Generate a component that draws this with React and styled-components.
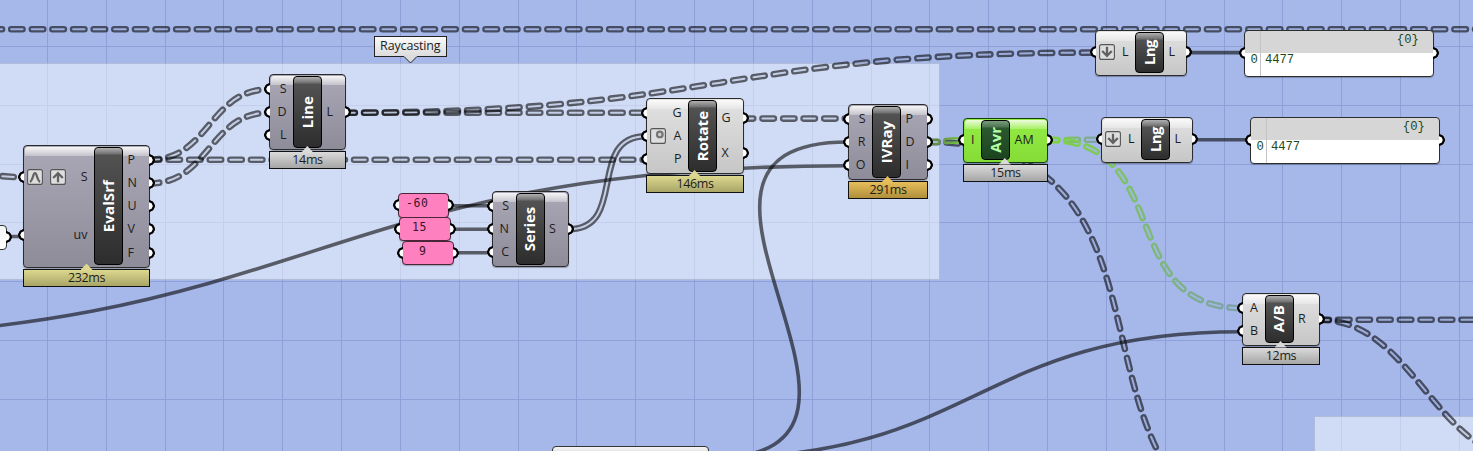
import React from 'react';
import styled, { createGlobalStyle, css } from 'styled-components';

const Global = createGlobalStyle`
  body { margin: 0; overflow: hidden; background: #a6b8ea; }
  * { box-sizing: border-box; }
`;

const Canvas = styled.main`
  position: relative;
  width: 1473px;
  height: 451px;
  overflow: hidden;
  background: #a6b8ea;
  font-family: 'Open Sans', 'Noto Sans', sans-serif;
  color: #1d1d1d;
`;

const Layer = styled.svg`
  position: absolute;
  inset: 0;
  display: block;
`;

/* ---------- nodes ---------- */

const tones = {
  gray: css`
    background: linear-gradient(#aaa8b6, #8e8c99);
    --gloss-top: #f6f6f7;
    --gloss-end: #c3c2cb;
  `,
  light: css`
    background: linear-gradient(#e2e2e2, #c6c6c6);
    --gloss-top: #fafafa;
    --gloss-end: #e6e6e6;
  `,
  green: css`
    background: linear-gradient(#95ec47, #84dc35);
    --gloss-top: #ecfcdc;
    --gloss-end: #a6f065;
  `,
};

const Item = styled.section`
  position: absolute;
  left: ${(p) => p.$x}px;
  top: ${(p) => p.$y}px;
  width: ${(p) => p.$w}px;
`;

const Body = styled.div`
  position: relative;
  display: flex;
  height: ${(p) => p.$h}px;
  padding: 2px 0 2.6px;
  border: 1px solid ${(p) => (p.$tone === 'green' ? '#12400c' : '#2b2b2e')};
  border-radius: 4px;
  box-shadow: 0 1px 1px rgba(0, 0, 0, 0.3);
  ${(p) => tones[p.$tone]}
  &::before {
    content: '';
    position: absolute;
    inset: 0.5px 0.5px auto;
    height: 9px;
    border-radius: 3px 3px 0 0;
    background: linear-gradient(var(--gloss-top), var(--gloss-end));
  }
`;

const Column = styled.div`
  position: relative;
  display: flex;
  flex-direction: column;
  flex: ${(p) => (p.$w ? `0 0 ${p.$w}px` : '1')};
`;

const portBase = css`
  content: '';
  position: absolute;
  top: calc(50% - 6px);
  width: 6px;
  height: 12px;
`;

const portLeft = css`
  ${portBase}
  left: -6px;
  background: radial-gradient(circle at 100% 50%, #fff 3.3px, #000 3.9px, #000 5.5px, transparent 6.1px);
`;

const portRight = css`
  ${portBase}
  right: -6px;
  background: radial-gradient(circle at 0 50%, #fff 3.3px, #000 3.9px, #000 5.5px, transparent 6.1px);
`;

const Socket = styled.div`
  position: relative;
  flex: 1;
  display: flex;
  align-items: center;
  gap: 7px;
  font-size: 12.5px;
  line-height: 16px;
  ${(p) => (p.$side === 'in' ? 'padding: 0 6.5px 0 3px;' : 'padding: 0 0 0 4.5px;')}
  &::after {
    ${(p) => (p.$side === 'in' ? portLeft : portRight)}
  }
`;

const SocketName = styled.span`
  margin-left: ${(p) => (p.$side === 'in' ? 'auto' : '0')};
`;

const Core = styled.div`
  position: relative;
  flex: 0 0 29px;
  margin: -0.8px 0;
  display: flex;
  align-items: center;
  justify-content: center;
  border: 1.5px solid #000;
  border-radius: 4px;
  background: ${(p) =>
    p.$tone === 'green'
      ? 'linear-gradient(#7b9c7c, #4d7450 6px, #2c5830 7px, #1b441e)'
      : 'linear-gradient(#b0b0b0, #707070 6px, #525252 7px, #2d2d2d)'};
  color: ${(p) => (p.$tone === 'green' ? '#b4ffa6' : '#fff')};
`;

const CoreName = styled.span`
  writing-mode: vertical-rl;
  transform: rotate(180deg) translateX(1.2px);
  font-size: 15px;
  font-weight: 700;
  line-height: 20px;
  white-space: nowrap;
  letter-spacing: ${(p) => p.$track || 0}px;
`;

const timeTones = {
  gray: ['#dadada', '#a6a6a6'],
  olive: ['#dcd88f', '#a9a566'],
  amber: ['#e6bf5b', '#b08f3b'],
};

const Timer = styled.div`
  position: relative;
  margin-top: 1px;
  height: 18px;
  border: 1px solid #111;
  background: linear-gradient(${(p) => timeTones[p.$tone].join(',')});
  font-size: 12.5px;
  line-height: 15px;
  letter-spacing: -0.35px;
  text-align: center;
  &::before {
    content: '';
    position: absolute;
    left: ${(p) => p.$tip - 7}px;
    top: -6.5px;
    width: 12px;
    height: 6.5px;
    background: ${(p) => timeTones[p.$tone][0]};
    clip-path: polygon(50% 0, 100% 100%, 0 100%);
  }
`;

const Badge = styled.svg`
  flex: none;
  width: 16px;
  height: 16px;
  display: block;
`;

const glyphs = {
  reparam: <path d="M2.8 12.8C6 12 5.8 4.2 8 4.2S10 12 13.2 12.8" />,
  graft: <path d="M8 13.2V4.4M3.2 9 8 4.2 12.8 9" />,
  flatten: <path d="M8 2.8v8.8M3.2 7 8 11.8 12.8 7" />,
  degrees: (
    <g>
      <circle cx="9.8" cy="6.4" r="2.8" stroke="#777" />
      <circle cx="9.8" cy="6.4" r="1.2" fill="#ccc" stroke="none" />
    </g>
  ),
};

const Modifier = ({ kind }) => (
  <Badge viewBox="0 0 16 16">
    <rect x="0.6" y="0.6" width="14.8" height="14.8" rx="2" fill="#dedede" stroke="#555" strokeWidth="1.1" />
    <g fill="none" stroke="#626262" strokeWidth="2.3">{glyphs[kind]}</g>
  </Badge>
);

const Node = ({ x, y, w, h, tone = 'light', left, name, track, inputs, outputs, time }) => (
  <Item $x={x} $y={y} $w={w}>
    <Body $h={h} $tone={tone}>
      <Column $w={left - 1}>
        {inputs.map((s) => (
          <Socket key={s.name} $side="in">
            {(s.mods || []).map((m) => <Modifier key={m} kind={m} />)}
            <SocketName $side="in">{s.name}</SocketName>
          </Socket>
        ))}
      </Column>
      <Core $tone={tone}><CoreName $track={track}>{name}</CoreName></Core>
      <Column>
        {outputs.map((s) => (
          <Socket key={s} $side="out"><SocketName>{s}</SocketName></Socket>
        ))}
      </Column>
    </Body>
    {time && <Timer $tone={time.tone} $tip={time.tip}>{time.text}</Timer>}
  </Item>
);

const nodes = [
  { x: 23, y: 145, w: 127, h: 123, tone: 'gray', left: 71, name: 'EvalSrf', track: 0.1,
    inputs: [{ name: 'S', mods: ['reparam', 'graft'] }, { name: 'uv' }],
    outputs: ['P', 'N', 'U', 'V', 'F'], time: { text: '232ms', tone: 'olive', tip: 63.5 } },
  { x: 269, y: 74, w: 77, h: 76.4, tone: 'gray', left: 24, name: 'Line', track: 0.1,
    inputs: [{ name: 'S' }, { name: 'D' }, { name: 'L' }],
    outputs: ['L'], time: { text: '14ms', tone: 'gray', tip: 38.3 } },
  { x: 491.5, y: 191, w: 77, h: 76.4, tone: 'gray', left: 24, name: 'Series', track: -0.1,
    inputs: [{ name: 'S' }, { name: 'N' }, { name: 'C' }], outputs: ['S'] },
  { x: 646, y: 98, w: 98, h: 76.4, left: 42, name: 'Rotate', track: 0,
    inputs: [{ name: 'G' }, { name: 'A', mods: ['degrees'] }, { name: 'P' }],
    outputs: ['G', 'X'], time: { text: '146ms', tone: 'olive', tip: 48.5 } },
  { x: 848, y: 104, w: 80, h: 76.4, tone: 'gray', left: 24, name: 'IVRay', track: 0,
    inputs: [{ name: 'S' }, { name: 'R' }, { name: 'O' }],
    outputs: ['P', 'D', 'I'], time: { text: '291ms', tone: 'amber', tip: 39.5 } },
  { x: 963, y: 118, w: 85, h: 44.5, tone: 'green', left: 18, name: 'Avr', track: 0,
    inputs: [{ name: 'I' }], outputs: ['AM'], time: { text: '15ms', tone: 'gray', tip: 41.8 } },
  { x: 1095, y: 30, w: 92, h: 45.5, left: 39, name: 'Lng', track: -0.6,
    inputs: [{ name: 'L', mods: ['flatten'] }], outputs: ['L'] },
  { x: 1101, y: 117, w: 92, h: 45.5, left: 39, name: 'Lng', track: -0.6,
    inputs: [{ name: 'L', mods: ['flatten'] }], outputs: ['L'] },
  { x: 1242, y: 293, w: 78, h: 52.6, left: 22.5, name: 'A/B', track: 0.2,
    inputs: [{ name: 'A' }, { name: 'B' }], outputs: ['R'], time: { text: '12ms', tone: 'gray', tip: 38.5 } },
];

/* ---------- panels ---------- */

const PanelFrame = styled.section`
  position: absolute;
  left: ${(p) => p.$x}px;
  top: ${(p) => p.$y}px;
  width: 189.4px;
  height: 46.5px;
  display: grid;
  grid-template: 22px 1fr / 16px 1fr;
  border: 1px solid #2d2d2d;
  border-radius: 4px;
  background: linear-gradient(#d6d6d6 22px, #fff 22px);
  box-shadow: 0 1px 1px rgba(0, 0, 0, 0.25);
  font: 12.2px/14px 'Liberation Mono', monospace;
  color: #1c4a1c;
  &::before { ${portLeft} top: 16px; }
  &::after { ${portRight} top: 16px; }
`;

const PanelCell = styled.span`
  padding: ${(p) => p.$pad};
  text-align: ${(p) => p.$align || 'left'};
  border-right: ${(p) => (p.$rule ? '1px solid #c4c4c4' : '0')};
`;

const Panel = ({ x, y }) => (
  <PanelFrame $x={x} $y={y}>
    <PanelCell $rule $pad="0" />
    <PanelCell $align="right" $pad="2px 14px 0 0">{'{0}'}</PanelCell>
    <PanelCell $rule $pad="0 0 0 5px">0</PanelCell>
    <PanelCell $pad="0 0 0 3.5px">4477</PanelCell>
  </PanelFrame>
);

const NumberPanel = styled.div`
  position: absolute;
  left: ${(p) => p.$x}px;
  top: ${(p) => p.$y}px;
  width: 51.6px;
  height: 24.3px;
  padding: 2px 0 0 ${(p) => p.$indent}px;
  border: 1px solid #4b2638;
  border-radius: 4px;
  background: #ff80bf;
  box-shadow: 0 1px 1px rgba(0, 0, 0, 0.25);
  font: 11.5px/14px 'DejaVu Sans Mono', monospace;
  letter-spacing: 0.6px;
  color: #3a1528;
  &::before { ${portLeft} }
  &::after { ${portRight} }
`;

const Fragment = styled.div`
  position: absolute;
  left: ${(p) => p.$x}px;
  top: ${(p) => p.$y}px;
  width: ${(p) => p.$w}px;
  height: 24.5px;
  border: 1px solid #333;
  border-radius: 4px;
  background: linear-gradient(#f4f4f4, ${(p) => p.$end});
  &::after { ${(p) => p.$port && portRight} }
`;

const Group = styled.div`
  position: absolute;
  left: ${(p) => p.$x}px;
  top: ${(p) => p.$y}px;
  width: ${(p) => p.$w}px;
  height: ${(p) => p.$h}px;
  border: 1px solid rgba(120, 130, 170, 0.35);
  background: rgba(248, 251, 255, 0.52);
`;

const Tag = styled.div`
  position: absolute;
  left: 374px;
  top: 36px;
  width: 72.6px;
  height: 21px;
  border: 1px solid #222;
  background: linear-gradient(#fafafa, #dcdcdc);
  font-size: 12.5px;
  line-height: 18px;
  letter-spacing: -0.15px;
  text-align: center;
`;

const TagTip = styled.svg`
  position: absolute;
  left: 29px;
  top: 18px;
  width: 13px;
  height: 9px;
`;

/* ---------- wires ---------- */

const curve = (x1, y1, x2, y2, d = (x2 - x1) / 2) =>
  `M${x1} ${y1}C${x1 + d} ${y1} ${x2 - d} ${y2} ${x2} ${y2 + 0.001}`;

const DARK = 'rgba(0,0,0,0.58)';

const solidWires = [
  curve(-226, 338, 848, 165.7),
  curve(711, 458, 848, 142, 233),
  curve(711, 458, 1242, 331.7),
  curve(449, 205.7, 491.5, 205.7),
  curve(450, 229.3, 491.5, 229.3),
  curve(453, 252.8, 491.5, 252.8),
  curve(1187, 52.6, 1245, 52.6),
  curve(1193, 139.7, 1251, 139.7),
  curve(10, 236.5, 20, 236.5),
];

const hollowWires = [
  { d: curve(-13, 29.2, 1500, 29.2), offset: -3.5 },
  { d: curve(150, 159.7, 269, 89.3) },
  { d: curve(150, 183.3, 269, 112.7) },
  { d: curve(150, 159.7, 646, 159.7) },
  { d: curve(345.5, 112.7, 646, 112.7) },
  { d: curve(345.5, 112.7, 1095, 52.6) },
  { d: curve(744, 118.6, 848, 118.6) },
  { d: curve(568.5, 229.3, 646, 136.3, 60), whole: true },
  { d: curve(928, 142, 1318, 540, 296) },
  { d: curve(1319.5, 319.8, 1530, 319.8) },
  { d: curve(1319.5, 319.8, 1530, 460, 94) },
  { d: 'M-22 174C-10 175 4 176.5 23 177.6', offset: -4 },
  { d: curve(928, 142, 963, 140.3), paint: 'url(#toGreen)' },
  { d: curve(1048, 140, 1101, 139.7), paint: 'url(#fadeShort)' },
  { d: curve(1048, 140, 1242, 308, 127), paint: 'url(#fadeLong)' },
];

const gridX = Array.from({ length: 25 }, (_, i) => Math.round(47 + i * 58.83) + 0.5);
const gridY = Array.from({ length: 7 }, (_, i) => Math.round(46 + i * 58.83) + 0.5);

const Grid = () => (
  <Layer width="1473" height="451">
    <g stroke="#8fa0d8" strokeWidth="1">
      {gridX.map((x) => <path key={x} d={`M${x} 0V451`} />)}
      {gridY.map((y) => <path key={y} d={`M0 ${y}H1473`} />)}
    </g>
  </Layer>
);

const Gradient = ({ id, x1, x2, from, to }) => (
  <linearGradient id={id} gradientUnits="userSpaceOnUse" x1={x1} x2={x2} y1="0" y2="0">
    <stop offset="0" stopColor={from} />
    <stop offset="1" stopColor={to} />
  </linearGradient>
);

const Wires = () => (
  <Layer width="1473" height="451">
    <defs>
      <Gradient id="toGreen" x1="928" x2="963" from="#5c7d50" to="#74c736" />
      <Gradient id="fadeShort" x1="1048" x2="1101" from="#7ed63a" to="#7e9db0" />
      <Gradient id="fadeLong" x1="1048" x2="1242" from="#7ed63a" to="#7d9fae" />
      {hollowWires.map((w, i) => {
        const dash = w.whole ? {} : { strokeDasharray: '11.4 9.22', strokeDashoffset: w.offset ?? 2.2 };
        return (
          <mask key={i} id={`w${i}`} maskUnits="userSpaceOnUse" x="-50" y="-10" width="1600" height="600">
            <path d={w.d} fill="none" stroke="#fff" strokeWidth="6.6" strokeLinecap="round" {...dash} />
            <path d={w.d} fill="none" stroke="#1a1a1a" strokeWidth="2" strokeLinecap="round" {...dash} />
          </mask>
        );
      })}
    </defs>
    {solidWires.map((d) => <path key={d} d={d} fill="none" stroke={DARK} strokeWidth="3.6" />)}
    {hollowWires.map((w, i) => (
      <g key={w.d} mask={`url(#w${i})`}>
        <path d={w.d} fill="none" stroke={w.paint || DARK} strokeWidth="9" strokeLinecap="round" />
      </g>
    ))}
  </Layer>
);

export default function App() {
  return (
    <>
      <Global />
      <Canvas>
        <Grid />
        <Group $x={-10} $y={63} $w={949.5} $h={217} />
        <Group $x={1314} $y={415.5} $w={200} $h={60} />
        <Wires />
        <Tag>
          Raycasting
          <TagTip viewBox="0 0 13 9">
            <path d="M0 1.5 6.5 8 13 1.5V0H0Z" fill="#dcdcdc" />
            <path d="M0 1.5 6.5 8 13 1.5" fill="none" stroke="#222" />
          </TagTip>
        </Tag>
        <Fragment $x={-30} $y={225} $w={36.5} $end="#fff" $port />
        <Fragment $x={552} $y={446} $w={157} $end="#aaa" />
        <NumberPanel $x={397.5} $y={193.3} $indent={7.5}>-60</NumberPanel>
        <NumberPanel $x={399} $y={217} $indent={12}>15</NumberPanel>
        <NumberPanel $x={402} $y={240.6} $indent={16}>9</NumberPanel>
        {nodes.map((n) => <Node key={`${n.name}${n.x}`} {...n} />)}
        <Panel x={1244.4} y={30} />
        <Panel x={1250.4} y={117} />
      </Canvas>
    </>
  );
}
